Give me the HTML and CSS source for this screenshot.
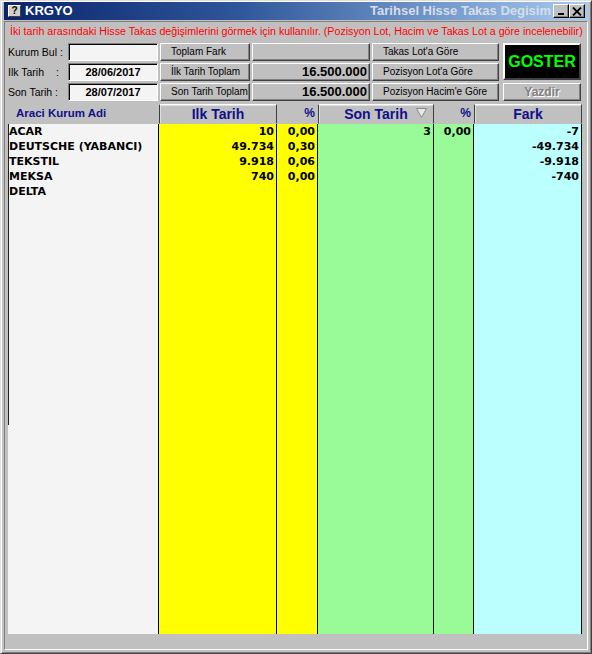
FILE: index.html
```html
<!DOCTYPE html>
<html>
<head>
<meta charset="utf-8">
<link rel="stylesheet" href="styles.css">
</head>
<body>
<div class="win">
  <div class="titlebar">
    <span class="appicon">?</span>
    <span class="apptitle">KRGYO</span>
    <span class="spacer"></span>
    <span class="caption">Tarihsel Hisse Takas Degisim</span>
    <span class="tbtn"><span class="minbar"></span></span>
    <span class="tbtn"><svg width="10" height="9" viewBox="0 0 10 9"><path d="M1 0.5 L9 8.5 M9 0.5 L1 8.5" stroke="#000" stroke-width="1.8"/></svg></span>
  </div>
  <div class="frame">
    <div class="info">İki tarih arasındaki Hisse Takas değişimlerini görmek için kullanılır. (Pozisyon Lot, Hacim ve Takas Lot a göre incelenebilir)</div>
    <div class="controls">
      <div class="lbl"><span>Kurum Bul</span><span class="colon c1">:</span></div>
      <div class="inp"></div>
      <div class="btn">Toplam Fark</div>
      <div class="btn"></div>
      <div class="btn">Takas Lot'a Göre</div>
      <div class="goster">GOSTER</div>

      <div class="lbl"><span>Ilk Tarih</span><span class="colon c2">:</span></div>
      <div class="inp date">28/06/2017</div>
      <div class="btn">İlk Tarih Toplam</div>
      <div class="btn val">16.500.000</div>
      <div class="btn">Pozisyon Lot'a Göre</div>

      <div class="lbl"><span>Son Tarih</span><span class="colon c3">:</span></div>
      <div class="inp date">28/07/2017</div>
      <div class="btn">Son Tarih Toplam</div>
      <div class="btn val">16.500.000</div>
      <div class="btn">Pozisyon Hacim'e Göre</div>
      <div class="btn yazdir">Yazdir</div>
    </div>
    <div class="table">
      <div class="col c-name">
        <div class="hd flat left">Araci Kurum Adi</div>
        <div class="bd">
          <div class="cell">ACAR</div>
          <div class="cell">DEUTSCHE (YABANCI)</div>
          <div class="cell">TEKSTIL</div>
          <div class="cell">MEKSA</div>
          <div class="cell">DELTA</div>
        </div>
      </div>
      <div class="col c-ilk">
        <div class="hd raised">Ilk Tarih</div>
        <div class="bd yellow">
          <div class="cell num">10</div>
          <div class="cell num">49.734</div>
          <div class="cell num">9.918</div>
          <div class="cell num">740</div>
        </div>
      </div>
      <div class="col c-p1">
        <div class="hd flat pct">%</div>
        <div class="bd yellow">
          <div class="cell num">0,00</div>
          <div class="cell num">0,30</div>
          <div class="cell num">0,06</div>
          <div class="cell num">0,00</div>
        </div>
      </div>
      <div class="col c-son">
        <div class="hd raised sort">Son Tarih<svg class="tri" width="11" height="10" viewBox="0 0 11 10"><path d="M0.5 0.5 H10.5 L5.5 9.5 Z" fill="#e8e8e8" stroke="#8a8a8a" stroke-width="1"/></svg></div>
        <div class="bd green">
          <div class="cell num">3</div>
        </div>
      </div>
      <div class="col c-p2">
        <div class="hd flat pct">%</div>
        <div class="bd green">
          <div class="cell num">0,00</div>
        </div>
      </div>
      <div class="col c-fark">
        <div class="hd raised">Fark</div>
        <div class="bd cyan">
          <div class="cell num">-7</div>
          <div class="cell num">-49.734</div>
          <div class="cell num">-9.918</div>
          <div class="cell num">-740</div>
        </div>
      </div>
    </div>
  </div>
</div>
</body>
</html>
```

FILE: styles.css
```css
html, body {
  margin: 0;
  padding: 0;
  background: #c0c0c0;
}
body {
  font-family: "Liberation Sans", Arial, sans-serif;
}
.win {
  width: 592px;
  height: 654px;
  box-sizing: border-box;
  background: #c0c0c0;
  border: 1px solid;
  border-color: #dfdfdf #404040 #404040 #dfdfdf;
  box-shadow: inset 1px 1px #ffffff, inset -1px -1px #808080;
  padding: 1px 3px 3px 3px;
  display: flex;
  flex-direction: column;
}
.titlebar {
  height: 18px;
  flex: none;
  display: flex;
  align-items: center;
  background: linear-gradient(to right, #0a246a 0%, #2f5699 40%, #a6caf0 100%);
}
.appicon {
  margin-left: 4px;
  width: 13px;
  height: 12px;
  box-sizing: border-box;
  background: #d4d0c8;
  border: 1px solid;
  border-color: #ffffff #404040 #404040 #ffffff;
  font: bold 10px/10px "Liberation Sans", Arial, sans-serif;
  color: #000;
  text-align: center;
}
.apptitle {
  margin-left: 4px;
  font: bold 13px/18px "Liberation Sans", Arial, sans-serif;
  color: #ffffff;
}
.spacer { flex: 1; }
.caption {
  margin-right: 2px;
  white-space: nowrap;
  font: bold 13px/18px "Liberation Sans", Arial, sans-serif;
  color: #d8dde8;
}
.tbtn {
  width: 16px;
  height: 14px;
  box-sizing: border-box;
  background: #c0c0c0;
  border: 1px solid;
  border-color: #ffffff #000000 #000000 #ffffff;
  box-shadow: inset -1px -1px #808080;
  display: flex;
  align-items: center;
  justify-content: center;
}
.tbtn:last-child { margin-right: 3px; }
.minbar {
  width: 6px;
  height: 2px;
  background: #000;
  margin-top: 6px;
  margin-right: 1px;
}
.frame {
  flex: 1;
  margin-top: 1px;
  border: 1px solid;
  border-color: #808080 #ffffff #ffffff #808080;
  display: flex;
  flex-direction: column;
}
.info {
  height: 18px;
  padding-left: 5px;
  font-size: 10.65px;
  line-height: 18px;
  color: #ff0000;
  white-space: nowrap;
}
.controls {
  margin-top: 3px;
  margin-left: 3px;
  display: grid;
  grid-template-columns: 58px 90px 90px 118px 127px 80px;
  grid-template-rows: 18px 18px 18px;
  column-gap: 2px;
  row-gap: 2px;
}
.lbl {
  display: flex;
  align-items: center;
  font-size: 10.5px;
  color: #000;
}
.colon { margin-left: auto; }
.c1 { margin-left: 3px; }
.c2 { margin-right: 7px; }
.c3 { margin-right: 8px; }
.inp {
  box-sizing: border-box;
  background: #f4f4f4;
  border: 1px solid;
  border-color: #808080 #ffffff #ffffff #808080;
  box-shadow: inset 1px 1px #000000;
}
.date {
  font-weight: bold;
  font-size: 11px;
  line-height: 16px;
  text-align: center;
}
.btn {
  box-sizing: border-box;
  background: #c0c0c0;
  border: 1px solid;
  border-color: #ffffff #404040 #404040 #ffffff;
  box-shadow: inset -1px -1px #808080;
  font-size: 10px;
  line-height: 16px;
  padding-left: 10px;
  white-space: nowrap;
  overflow: hidden;
  color: #000;
}
.val {
  text-align: right;
  padding: 0 2px 0 0;
  font-weight: bold;
  font-size: 13px;
}
.goster {
  grid-column: 6;
  grid-row: 1 / span 2;
  margin-left: 2px;
  margin-bottom: 1px;
  box-sizing: border-box;
  background: #000;
  border: 2px solid;
  border-color: #ffffff #404040 #404040 #ffffff;
  color: #00ff00;
  font-weight: bold;
  font-size: 16px;
  display: flex;
  align-items: center;
  justify-content: center;
}
.yazdir {
  grid-column: 6;
  grid-row: 3;
  margin-left: 2px;
  padding: 0;
  text-align: center;
  font-weight: bold;
  font-size: 12px;
  color: #808080;
  text-shadow: 1px 1px #ffffff;
}
.table {
  margin-top: 3px;
  margin-left: 3px;
  margin-bottom: 15px;
  flex: 1;
  display: flex;
}
.col {
  display: flex;
  flex-direction: column;
}
.c-name { width: 151px; }
.c-ilk { width: 118px; }
.c-p1 { width: 41px; }
.c-son { width: 116px; }
.c-p2 { width: 40px; }
.c-fark { width: 108px; }
.hd {
  height: 20px;
  box-sizing: border-box;
  color: #10108a;
  font-weight: bold;
  font-size: 14px;
  line-height: 18px;
  text-align: center;
  white-space: nowrap;
}
.hd.left {
  text-align: left;
  padding-left: 8px;
  font-size: 11.5px;
}
.hd.pct {
  text-align: right;
  padding-right: 3px;
  font-size: 12px;
}
.raised {
  border: 1px solid;
  border-color: #ffffff #404040 #c0c0c0 #404040;
  box-shadow: inset 1px 1px #dfdfdf;
}
.sort { position: relative; }
.tri {
  position: absolute;
  right: 6px;
  top: 3px;
}
.bd {
  flex: 1;
  box-sizing: border-box;
  border-right: 1px solid #000;
  font-family: "DejaVu Sans", Verdana, sans-serif;
  font-weight: bold;
  font-size: 11px;
  color: #000;
}
.c-name .bd {
  background: linear-gradient(#202020, #202020) left top / 1px 301px no-repeat, #f4f4f4;
}
.yellow { background: #ffff00; }
.green { background: #98fb98; }
.cyan { background: #bbffff; }
.cell {
  height: 15px;
  line-height: 16px;
  white-space: nowrap;
  overflow: hidden;
  padding-left: 1px;
}
.num {
  text-align: right;
  padding: 0 2px 0 0;
}
```
